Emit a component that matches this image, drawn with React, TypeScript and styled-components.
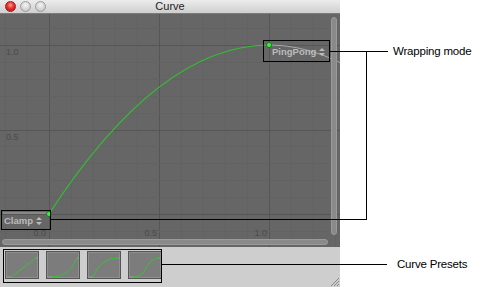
import styled, { createGlobalStyle } from "styled-components";

const GlobalStyle = createGlobalStyle`
  html, body {
    margin: 0;
    padding: 0;
    background: #ffffff;
  }
  body {
    font-family: "Liberation Sans", Arial, sans-serif;
  }
`;

// graph scale (inside the graph area)
const X0 = 49;
const X1 = 269;
const Y0 = 200;
const Y1 = 31;
const GRAPH_W = 340;
const GRAPH_H = 233;

const Stage = styled.div`
  position: relative;
  display: flex;
  width: 500px;
  height: 287px;
  overflow: hidden;
`;

const Window = styled.div`
  display: flex;
  flex-direction: column;
  width: 340px;
  height: 287px;
  flex-shrink: 0;
`;

const TitleBar = styled.div`
  display: grid;
  grid-template-columns: 1fr auto 1fr;
  align-items: center;
  height: 13px;
  background: linear-gradient(#ececec, #cfcfcf);
  border-bottom: 1px solid #7c7c7c;
`;

const Lights = styled.div`
  display: flex;
  gap: 4px;
  padding-left: 5px;
`;

const Light = styled.span<{ $active?: boolean }>`
  width: 9px;
  height: 9px;
  border-radius: 50%;
  border: 1px solid ${({ $active }) => ($active ? "#9a1c1c" : "#9c9c9c")};
  background: ${({ $active }) =>
    $active
      ? "radial-gradient(circle at 50% 35%, #ff9a9a 0%, #e83030 45%, #b01010 100%)"
      : "radial-gradient(circle at 50% 35%, #f4f4f4 0%, #d6d6d6 55%, #b8b8b8 100%)"};
`;

const Title = styled.span`
  font-size: 11px;
  color: #1e1e1e;
  line-height: 13px;
`;

const GraphArea = styled.div`
  position: relative;
  height: ${GRAPH_H}px;
  background: #666666;
`;

const GraphSvg = styled.svg`
  display: block;
`;

const WrapSelect = styled.div<{ $left: number; $top: number }>`
  position: absolute;
  left: ${({ $left }) => $left}px;
  top: ${({ $top }) => $top}px;
  display: flex;
  align-items: center;
  gap: 3px;
  font-size: 9.5px;
  font-weight: bold;
  color: #bcbcbc;
  line-height: 11px;
`;

const VScroll = styled.div`
  position: absolute;
  left: 331px;
  top: 3px;
  width: 4px;
  height: 216px;
  border-radius: 3px;
  background: #8a8a8a;
  border: 1px solid #9a9a9a;
`;

const HScroll = styled.div`
  position: absolute;
  left: 2px;
  top: 225px;
  width: 324px;
  height: 4px;
  border-radius: 3px;
  background: #8a8a8a;
  border: 1px solid #9a9a9a;
`;

const PresetBar = styled.div`
  position: relative;
  flex: 1;
  display: flex;
  gap: 7px;
  padding: 4px 0 0 5px;
  background: #cecece;
`;

const PresetThumb = styled.div`
  width: 32px;
  height: 26px;
  border: 1px solid #555555;
  background: #7c7c7c;
  box-shadow: inset 0 0 0 1px #8e8e8e;
`;

const Grip = styled.svg`
  position: absolute;
  right: 0;
  bottom: 0;
`;

const Legend = styled.div`
  display: flex;
  flex-direction: column;
  align-items: flex-start;
  padding: 44px 0 0 53px;
`;

const CalloutLabel = styled.span<{ $shift?: number; $gap?: number }>`
  margin-left: ${({ $shift }) => $shift ?? 0}px;
  margin-top: ${({ $gap }) => $gap ?? 0}px;
  font-size: 11.5px;
  letter-spacing: -0.2px;
  line-height: 14px;
  color: #000000;
  white-space: nowrap;
`;

const Callouts = styled.svg`
  position: absolute;
  left: 0;
  top: 0;
  pointer-events: none;
`;

function UpDown() {
  return (
    <svg width="6" height="8" viewBox="0 0 6 8">
      <path d="M3 0 L6 3 L0 3 Z M3 8 L6 5 L0 5 Z" fill="#bcbcbc" />
    </svg>
  );
}

function CurveGraph() {
  const stepX = (X1 - X0) / 10;
  const stepY = (Y0 - Y1) / 10;
  const vLines = [];
  for (let k = -2; k <= 13; k++) {
    const x = Math.round(X0 + k * stepX) + 0.5;
    vLines.push(
      <line
        key={"v" + k}
        x1={x}
        x2={x}
        y1={0}
        y2={GRAPH_H}
        stroke={k % 5 === 0 ? "#565656" : "#626262"}
      />
    );
  }
  const hLines = [];
  for (let k = -1; k <= 12; k++) {
    const y = Math.round(Y0 - k * stepY) + 0.5;
    hLines.push(
      <line
        key={"h" + k}
        x1={0}
        x2={GRAPH_W}
        y1={y}
        y2={y}
        stroke={k % 5 === 0 ? "#565656" : "#626262"}
      />
    );
  }

  return (
    <GraphSvg width={GRAPH_W} height={GRAPH_H}>
      <g shapeRendering="crispEdges">
        {vLines}
        {hLines}
      </g>
      <g fontFamily="Liberation Sans, Arial, sans-serif" fontSize="9" fill="#4b4b4b">
        <text x="6" y="41">1.0</text>
        <text x="6" y="126">0.5</text>
        <text x="46" y="222" textAnchor="end">0.0</text>
        <text x="157" y="222" textAnchor="end">0.5</text>
        <text x="267" y="222" textAnchor="end">1.0</text>
      </g>
      {/* wrap continuations */}
      <line x1="3" x2={X0} y1={Y0 - 1} y2={Y0 - 1} stroke="#a9a9a9" strokeWidth="1" />
      <path d={`M${X1},${Y1} Q${X1 + 110},${Y1} ${X1 + 220},${Y0}`} stroke="#a9a9a9" fill="none" />
      <path
        d={`M${X0},${Y0} Q${(X0 + X1) / 2},${Y1} ${X1},${Y1}`}
        stroke="#2fc42f"
        strokeWidth="1.2"
        fill="none"
      />
      <circle cx={X0} cy={Y0} r="2.5" fill="#3ef03e" stroke="#136b13" strokeWidth="0.8" />
      <circle cx={X1} cy={Y1} r="2.5" fill="#3ef03e" stroke="#136b13" strokeWidth="0.8" />
    </GraphSvg>
  );
}

const presets = [
  "M4,24 L29,5",
  "M4,24 Q22,24 29,5",
  "M4,24 Q11,5 29,5",
  "M4,24 C18,24 15,5 29,5",
];

function PresetCurve({ d }: { d: string }) {
  return (
    <svg width="32" height="26" viewBox="-1 -1 32 26">
      <line x1="-1" x2="4" y1="24" y2="24" stroke="#9a9a9a" />
      <line x1="29" x2="32" y1="5" y2="5" stroke="#9a9a9a" />
      <path d={d} stroke="#35c435" strokeWidth="1" fill="none" />
    </svg>
  );
}

export default function App() {
  return (
    <>
      <GlobalStyle />
      <Stage>
        <Window>
          <TitleBar>
            <Lights>
              <Light $active />
              <Light />
              <Light />
            </Lights>
            <Title>Curve</Title>
            <span />
          </TitleBar>
          <GraphArea>
            <CurveGraph />
            <WrapSelect $left={4} $top={201}>
              Clamp <UpDown />
            </WrapSelect>
            <WrapSelect $left={272} $top={32}>
              PingPong <UpDown />
            </WrapSelect>
            <VScroll />
            <HScroll />
          </GraphArea>
          <PresetBar>
            {presets.map((d) => (
              <PresetThumb key={d}>
                <PresetCurve d={d} />
              </PresetThumb>
            ))}
            <Grip width="11" height="11" viewBox="0 0 11 11">
              <path d="M10 2 L2 10 M10 5 L5 10 M10 8 L8 10" stroke="#8a8a8a" strokeWidth="1" />
            </Grip>
          </PresetBar>
        </Window>
        <Legend>
          <CalloutLabel>Wrapping mode</CalloutLabel>
          <CalloutLabel $shift={4} $gap={199}>
            Curve Presets
          </CalloutLabel>
        </Legend>
        <Callouts width="500" height="287" shapeRendering="crispEdges">
          <g stroke="#000000" strokeWidth="1" fill="none">
            <rect x="263.5" y="40.5" width="66" height="21" />
            <line x1="329" y1="51.5" x2="388" y2="51.5" />
            <line x1="366.5" y1="51" x2="366.5" y2="220" />
            <line x1="50" y1="219.5" x2="367" y2="219.5" />
            <rect x="1.5" y="210.5" width="49" height="19" />
            <rect x="3.5" y="249.5" width="158" height="33" />
            <line x1="162" y1="264.5" x2="387" y2="264.5" />
          </g>
        </Callouts>
      </Stage>
    </>
  );
}
